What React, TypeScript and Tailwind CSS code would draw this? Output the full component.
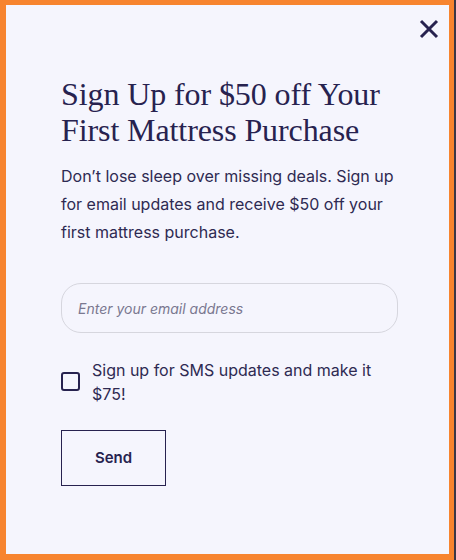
import { useState } from 'react';

function CloseIcon() {
  return (
    <svg width="20" height="20" viewBox="0 0 20 20" fill="none" stroke="currentColor" strokeWidth="3" strokeLinecap="butt">
      <path d="M2 2 L18 18 M18 2 L2 18" />
    </svg>
  );
}

export default function App() {
  const [email, setEmail] = useState('');
  const [sms, setSms] = useState(false);

  return (
    <div className="w-[456px] h-[560px] bg-[#3b3747] flex">
      <div className="w-[454px] h-[560px] bg-[#f7842f] pl-[6px] pt-[5px] pr-[5px] pb-[6px] flex">
        <div className="flex-1 bg-[#f5f5fd] text-[#27224f] flex flex-col pl-[55px] pr-[51px] relative font-['Inter',sans-serif]">
          <button className="absolute right-[10px] top-[14px] text-[#27224f]" aria-label="Close">
            <CloseIcon />
          </button>

          <h2 className="mt-[71px] font-['Liberation_Serif',serif] text-[32px] leading-[36px] tracking-[-0.1px] font-normal">
            Sign Up for $50 off Your First Mattress Purchase
          </h2>

          <p className="mt-[14px] text-[16px] leading-[28px] text-[#2e2a52]">
            Don’t lose sleep over missing deals. Sign up for email updates and receive $50 off your first mattress purchase.
          </p>

          <input
            value={email}
            onChange={(e) => setEmail(e.target.value)}
            placeholder="Enter your email address"
            className="mt-[37px] h-[50px] w-full rounded-[20px] border border-[#d6d6de] bg-transparent px-[16px] text-[14px] italic placeholder:text-[#7a7890] outline-none"
          />

          <label className="mt-[25px] flex items-start gap-[12px] cursor-pointer">
            <span
              onClick={() => setSms(!sms)}
              className={`mt-[14px] w-[19px] h-[19px] shrink-0 rounded-[3px] border-2 border-[#27224f] ${sms ? 'bg-[#27224f]' : ''}`}
            />
            <span className="text-[16px] leading-[24px] text-[#2e2a52]">
              Sign up for SMS updates and make it $75!
            </span>
          </label>

          <button className="mt-[24px] w-[105px] h-[56px] border border-[#27224f] text-[15px] font-semibold">
            Send
          </button>
        </div>
      </div>
    </div>
  );
}
